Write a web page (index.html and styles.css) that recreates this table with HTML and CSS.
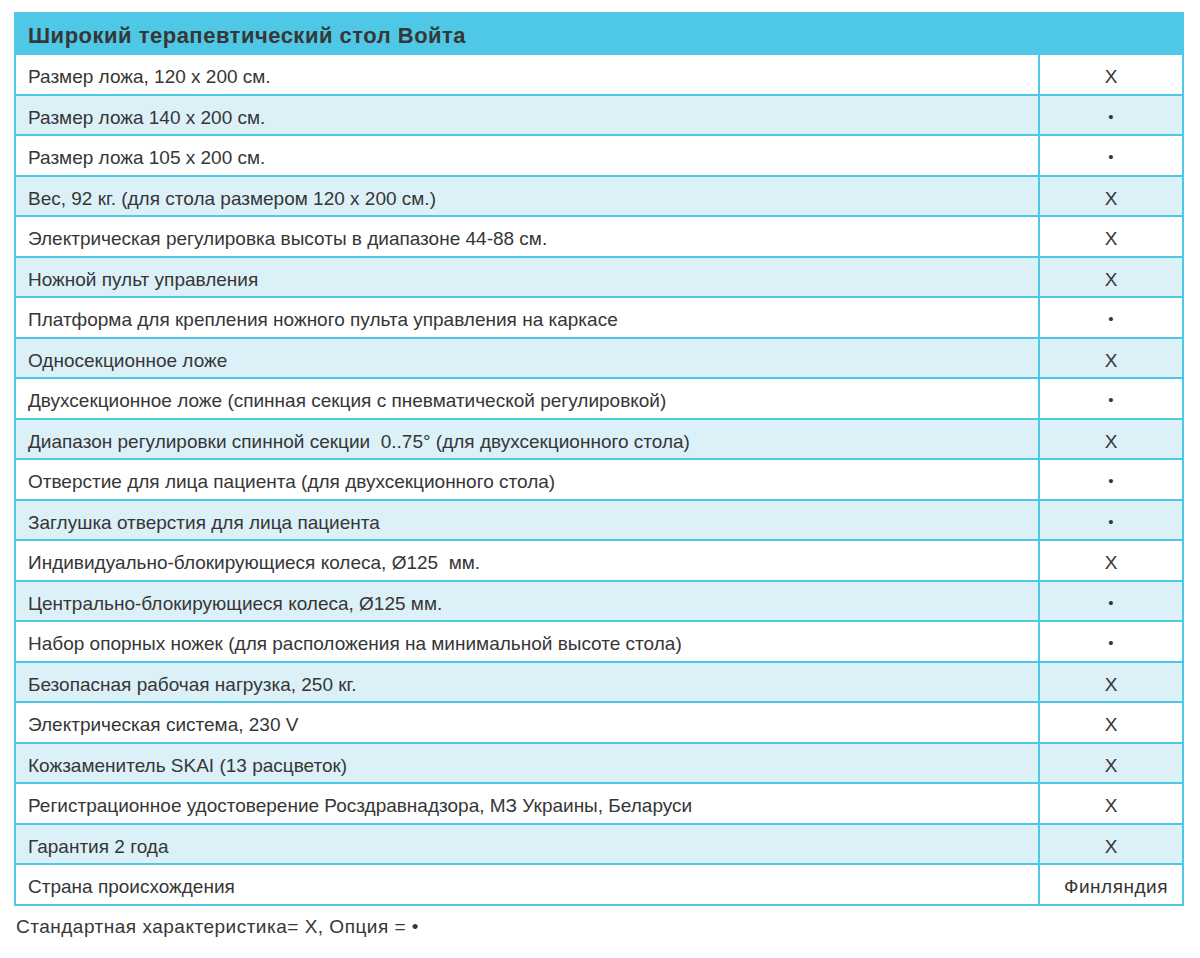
FILE: index.html
```html
<!DOCTYPE html>
<html lang="ru">
<head>
<meta charset="utf-8">
<title>Широкий терапевтический стол Войта</title>
<link rel="stylesheet" href="styles.css">
</head>
<body>
<div class="spec">
  <div class="spec-head">Широкий терапевтический стол Войта</div>
  <div class="cell">Размер ложа, 120 x 200 см.</div><div class="val">X</div>
  <div class="cell alt">Размер ложа 140 x 200 см.</div><div class="val alt dot">•</div>
  <div class="cell">Размер ложа 105 x 200 см.</div><div class="val dot">•</div>
  <div class="cell alt">Вес, 92 кг. (для стола размером 120 x 200 см.)</div><div class="val alt">X</div>
  <div class="cell">Электрическая регулировка высоты в диапазоне 44-88 см.</div><div class="val">X</div>
  <div class="cell alt">Ножной пульт управления</div><div class="val alt">X</div>
  <div class="cell">Платформа для крепления ножного пульта управления на каркасе</div><div class="val dot">•</div>
  <div class="cell alt">Односекционное ложе</div><div class="val alt">X</div>
  <div class="cell">Двухсекционное ложе (спинная секция с пневматической регулировкой)</div><div class="val dot">•</div>
  <div class="cell alt">Диапазон регулировки спинной секции &nbsp;0..75° (для двухсекционного стола)</div><div class="val alt">X</div>
  <div class="cell">Отверстие для лица пациента (для двухсекционного стола)</div><div class="val dot">•</div>
  <div class="cell alt">Заглушка отверстия для лица пациента</div><div class="val alt dot">•</div>
  <div class="cell">Индивидуально-блокирующиеся колеса, Ø125 &nbsp;мм.</div><div class="val">X</div>
  <div class="cell alt">Центрально-блокирующиеся колеса, Ø125 мм.</div><div class="val alt dot">•</div>
  <div class="cell">Набор опорных ножек (для расположения на минимальной высоте стола)</div><div class="val dot">•</div>
  <div class="cell alt">Безопасная рабочая нагрузка, 250 кг.</div><div class="val alt">X</div>
  <div class="cell">Электрическая система, 230 V</div><div class="val">X</div>
  <div class="cell alt">Кожзаменитель SKAI (13 расцветок)</div><div class="val alt">X</div>
  <div class="cell">Регистрационное удостоверение Росздравнадзора, МЗ Украины, Беларуси</div><div class="val">X</div>
  <div class="cell alt">Гарантия 2 года</div><div class="val alt">X</div>
  <div class="cell">Страна происхождения</div><div class="val country">Финляндия</div>
</div>
<p class="legend">Стандартная характеристика= X, Опция = •</p>
</body>
</html>
```

FILE: styles.css
```css
html, body {
  margin: 0;
  padding: 0;
  background: #ffffff;
}
body {
  font-family: "Liberation Sans", Arial, sans-serif;
  color: #363636;
}
.spec {
  margin: 12px 0 0 14px;
  width: 1166px;
  border: 2px solid #4fc8e7;
  background: #4fc8e7;
  display: grid;
  grid-template-columns: 1022px 142px;
  grid-auto-rows: 38.5px;
  grid-template-rows: 39px;
  gap: 2px;
}
.spec-head {
  grid-column: 1 / 3;
  display: flex;
  align-items: center;
  padding: 4px 0 0 12px;
  font-weight: bold;
  font-size: 22px;
  letter-spacing: 0.5px;
  color: #373737;
}
.cell, .val {
  background: #ffffff;
  display: flex;
  align-items: center;
  font-size: 19px;
  padding-top: 6px;
  box-sizing: border-box;
}
.cell {
  padding-left: 12px;
}
.val {
  justify-content: center;
}
.alt {
  background: #dcf0f8;
}
.dot {
  font-size: 15px;
  padding-top: 3px;
}
.country {
  font-size: 19px;
  letter-spacing: 0.5px;
  padding-left: 10px;
}
.legend {
  margin: 10px 0 0 16px;
  font-size: 19px;
  letter-spacing: 0.5px;
  color: #363636;
}
```
